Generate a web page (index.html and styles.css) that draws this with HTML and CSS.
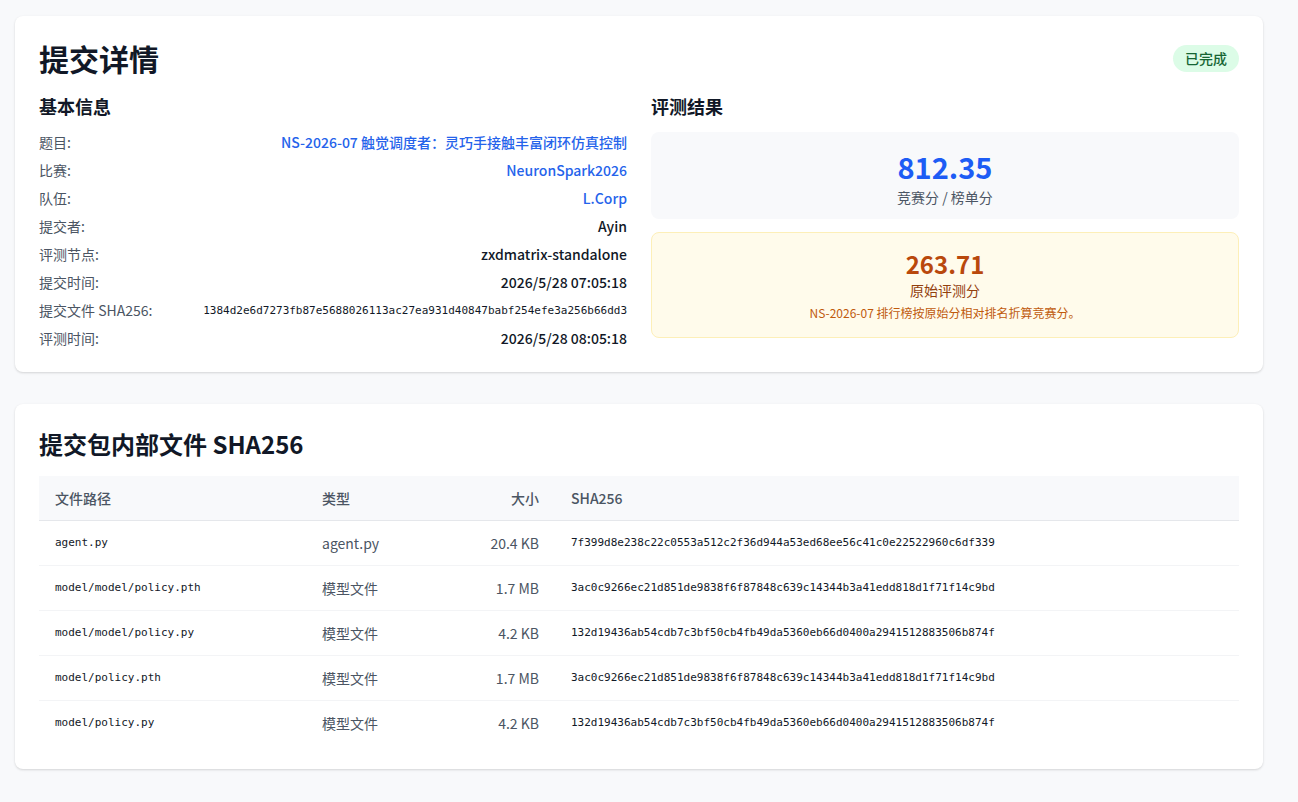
FILE: index.html
```html
<!DOCTYPE html>
<html>
<head>
  <meta charset="utf-8">
  <meta name="viewport" content="width=device-width">
  <title>提交详情</title>
  <link rel="stylesheet" href="styles.css">
</head>
<body>
  <section class="page">
    <div class="card">
      <div class="cardHead">
        <h1 class="title">提交详情</h1>
        <span class="badge">已完成</span>
      </div>
      <div class="columns">
        <div class="col">
          <h2 class="subTitle">基本信息</h2>
          <div class="infoList">
            <div class="infoRow"><span class="label">题目:</span><a class="value link">NS-2026-07 触觉调度者：灵巧手接触丰富闭环仿真控制</a></div>
            <div class="infoRow"><span class="label">比赛:</span><a class="value link">NeuronSpark2026</a></div>
            <div class="infoRow"><span class="label">队伍:</span><a class="value link">L.Corp</a></div>
            <div class="infoRow"><span class="label">提交者:</span><span class="value">Ayin</span></div>
            <div class="infoRow"><span class="label">评测节点:</span><span class="value">zxdmatrix-standalone</span></div>
            <div class="infoRow"><span class="label">提交时间:</span><span class="value">2026/5/28 07:05:18</span></div>
            <div class="infoRow"><span class="label">提交文件 SHA256:</span><span class="value mono">1384d2e6d7273fb87e5688026113ac27ea931d40847babf254efe3a256b66dd3</span></div>
            <div class="infoRow"><span class="label">评测时间:</span><span class="value">2026/5/28 08:05:18</span></div>
          </div>
        </div>
        <div class="col">
          <h2 class="subTitle">评测结果</h2>
          <div class="scoreBox">
            <div class="scoreMain">812.35</div>
            <div class="scoreLabel">竞赛分 / 榜单分</div>
          </div>
          <div class="rawBox">
            <div class="rawScore">263.71</div>
            <div class="rawLabel">原始评测分</div>
            <div class="rawNote">NS-2026-07 排行榜按原始分相对排名折算竞赛分。</div>
          </div>
        </div>
      </div>
    </div>

    <div class="card">
      <h2 class="tableTitle">提交包内部文件 SHA256</h2>
      <table class="fileTable">
        <thead>
          <tr>
            <th class="colPath">文件路径</th>
            <th class="colType">类型</th>
            <th class="colSize">大小</th>
            <th>SHA256</th>
          </tr>
        </thead>
        <tbody>
          <tr>
            <td class="mono">agent.py</td>
            <td class="muted">agent.py</td>
            <td class="muted right">20.4 KB</td>
            <td class="mono">7f399d8e238c22c0553a512c2f36d944a53ed68ee56c41c0e22522960c6df339</td>
          </tr>
          <tr>
            <td class="mono">model/model/policy.pth</td>
            <td class="muted">模型文件</td>
            <td class="muted right">1.7 MB</td>
            <td class="mono">3ac0c9266ec21d851de9838f6f87848c639c14344b3a41edd818d1f71f14c9bd</td>
          </tr>
          <tr>
            <td class="mono">model/model/policy.py</td>
            <td class="muted">模型文件</td>
            <td class="muted right">4.2 KB</td>
            <td class="mono">132d19436ab54cdb7c3bf50cb4fb49da5360eb66d0400a2941512883506b874f</td>
          </tr>
          <tr>
            <td class="mono">model/policy.pth</td>
            <td class="muted">模型文件</td>
            <td class="muted right">1.7 MB</td>
            <td class="mono">3ac0c9266ec21d851de9838f6f87848c639c14344b3a41edd818d1f71f14c9bd</td>
          </tr>
          <tr>
            <td class="mono">model/policy.py</td>
            <td class="muted">模型文件</td>
            <td class="muted right">4.2 KB</td>
            <td class="mono">132d19436ab54cdb7c3bf50cb4fb49da5360eb66d0400a2941512883506b874f</td>
          </tr>
        </tbody>
      </table>
    </div>
  </section>
</body>
</html>
```

FILE: styles.css
```css
body {
  margin: 0;
  background-color: #f8f9fb;
  font-family: "Noto Sans CJK SC", "Noto Sans", sans-serif;
  color: #111827;
}

.page {
  box-sizing: border-box;
  width: 1248px;
  margin-left: 15px;
  padding: 16px 0;
  display: flex;
  flex-direction: column;
  gap: 32px;
}

.card {
  background-color: #ffffff;
  border-radius: 8px;
  box-shadow: 0 1px 3px rgba(0, 0, 0, 0.1), 0 1px 2px rgba(0, 0, 0, 0.06);
  padding: 24px;
}
.card:first-child {
  padding-bottom: 20px;
}

.cardHead {
  display: flex;
  justify-content: space-between;
  align-items: center;
}

.title {
  margin: 0;
  font-size: 30px;
  line-height: 36px;
  font-weight: 700;
}

.badge {
  background-color: #dcfce7;
  color: #166534;
  font-size: 14px;
  line-height: 27px;
  padding: 0 12px;
  border-radius: 999px;
  font-weight: 500;
}

.columns {
  display: flex;
  gap: 24px;
  margin-top: 16px;
}
.col {
  flex: 1;
  min-width: 0;
}

.subTitle {
  margin: 0 0 8px 0;
  font-size: 18px;
  line-height: 28px;
  font-weight: 700;
}

.infoRow {
  display: flex;
  justify-content: space-between;
  align-items: center;
  height: 28px;
  font-size: 14px;
}
.label {
  color: #4b5563;
}
.value {
  font-weight: 500;
  color: #111827;
}
.value.link {
  color: #2563eb;
  font-weight: 500;
  text-decoration: none;
}
.mono {
  font-family: "DejaVu Sans Mono", monospace;
  font-size: 11px;
  font-weight: 400;
}

.scoreBox {
  margin-top: 12px;
  background-color: #f8f9fb;
  border-radius: 8px;
  padding: 13px 16px 12px;
  text-align: center;
}
.scoreMain {
  font-size: 29px;
  line-height: 42px;
  font-weight: 700;
  color: #1d5cf5;
}
.scoreLabel {
  font-size: 14px;
  line-height: 20px;
  color: #4b5563;
}

.rawBox {
  margin-top: 13px;
  background-color: #fffbeb;
  border: 1px solid #fdefb8;
  border-radius: 8px;
  padding: 15px 16px;
  text-align: center;
}
.rawScore {
  font-size: 24px;
  line-height: 32px;
  font-weight: 700;
  color: #b9480c;
}
.rawLabel {
  font-size: 14px;
  line-height: 20px;
  color: #92400e;
}
.rawNote {
  margin-top: 4px;
  font-size: 12px;
  line-height: 18px;
  color: #c05a0c;
}

.tableTitle {
  margin: 0 0 16px 0;
  font-size: 24px;
  line-height: 32px;
  font-weight: 700;
}

.fileTable {
  width: 100%;
  border-collapse: collapse;
  font-size: 14px;
}
.fileTable th {
  background-color: #f8f9fb;
  color: #4b5563;
  font-weight: 500;
  text-align: left;
  padding: 12px 16px;
  line-height: 20px;
  border-bottom: 1px solid #e5e7eb;
}
.fileTable td {
  padding: 12px 16px;
  line-height: 20px;
  border-bottom: 1px solid #f3f4f6;
}
.fileTable tbody tr:last-child td {
  border-bottom: none;
}
.colPath {
  width: 235px;
}
.colType {
  width: 128px;
}
.colSize {
  width: 57px;
  text-align: right !important;
}
.muted {
  color: #4b5563;
}
.right {
  text-align: right;
}
```
